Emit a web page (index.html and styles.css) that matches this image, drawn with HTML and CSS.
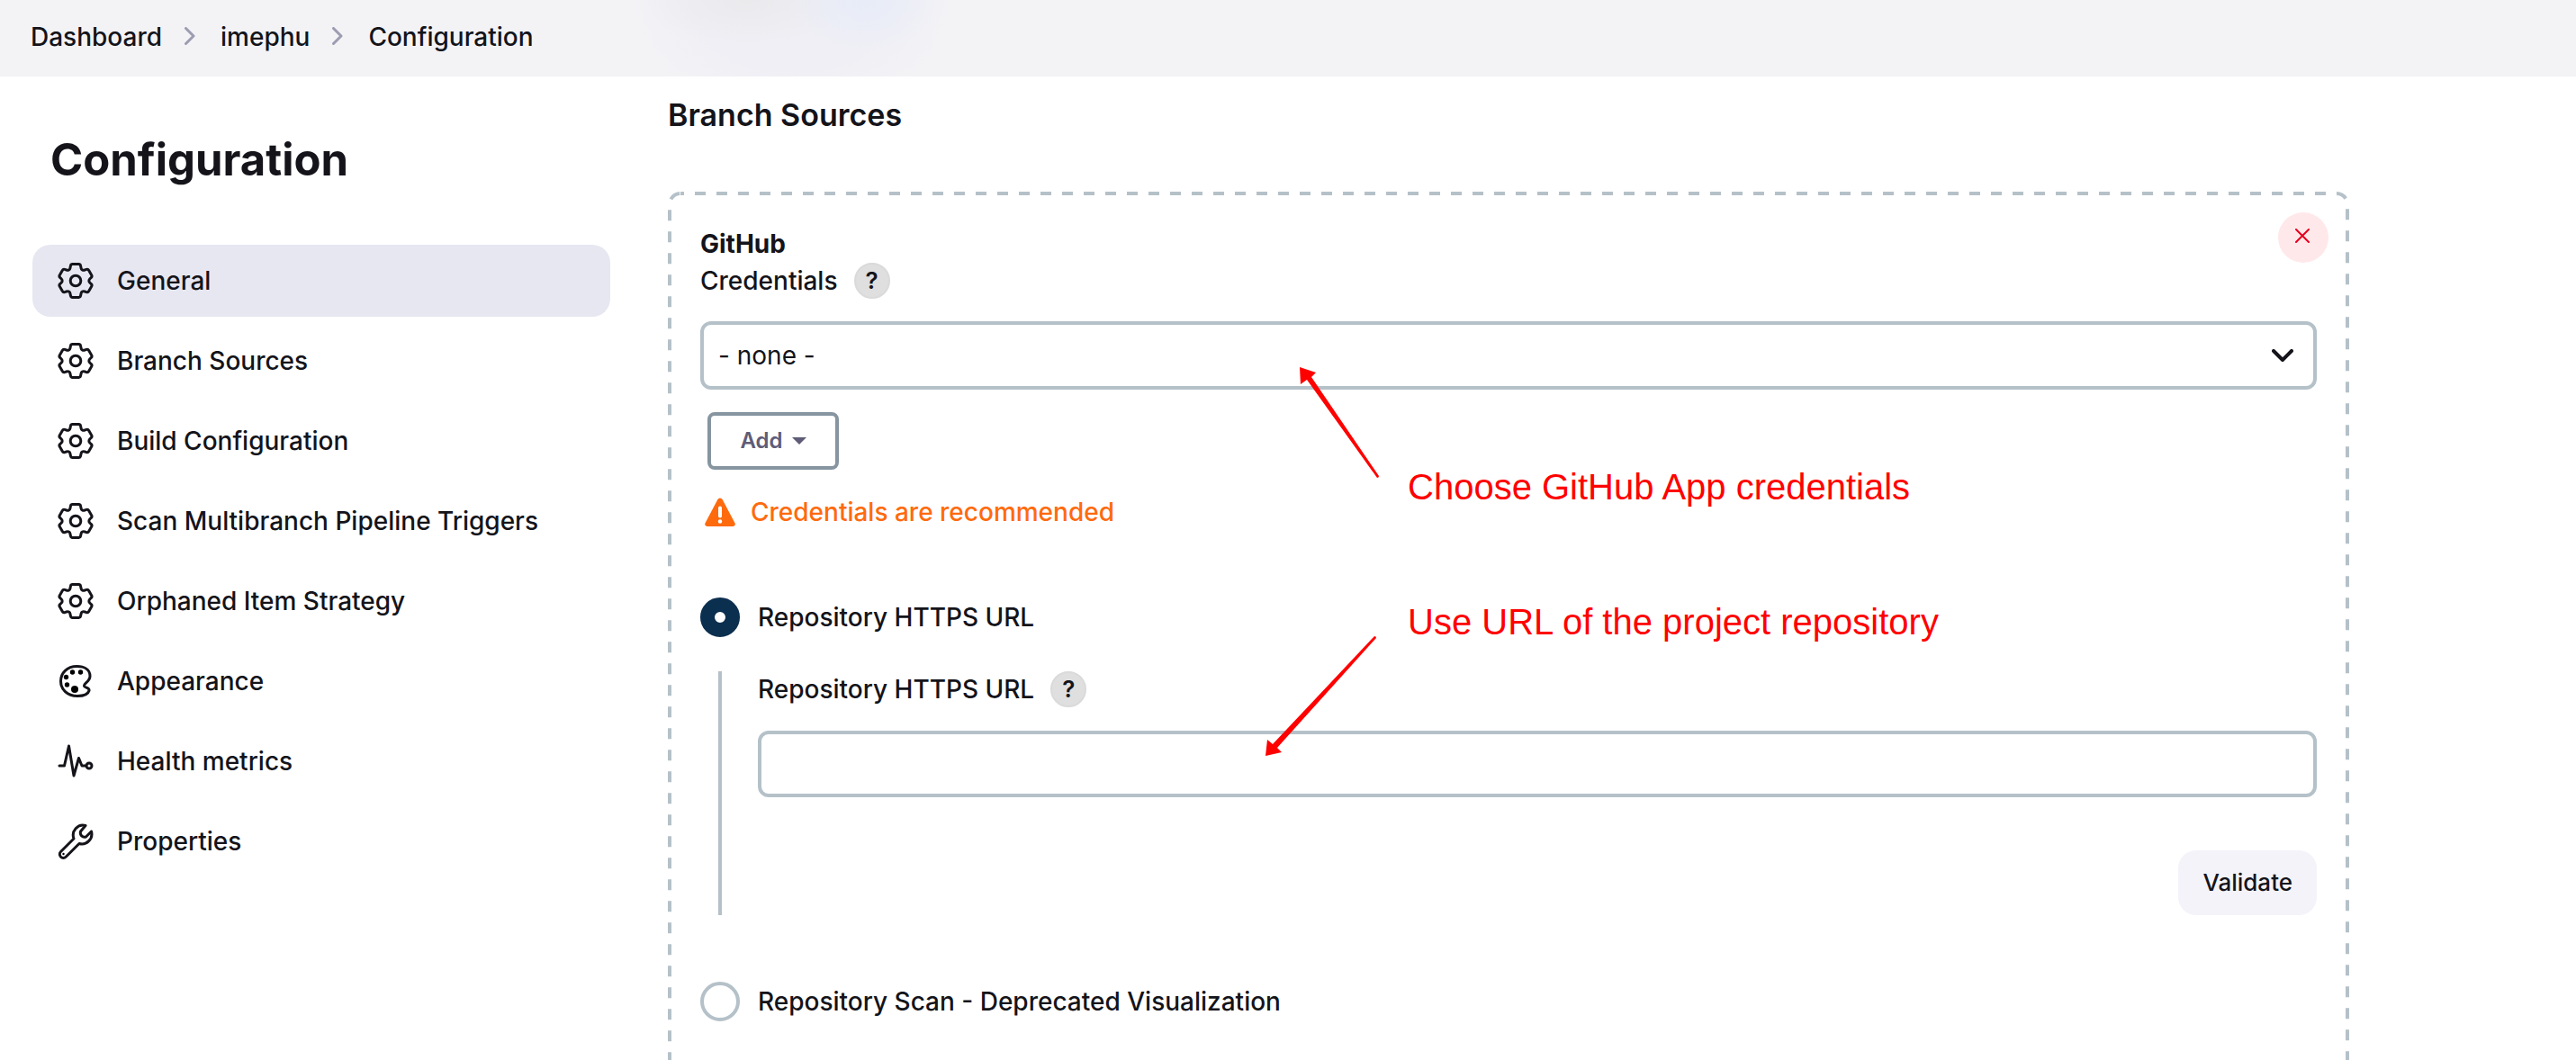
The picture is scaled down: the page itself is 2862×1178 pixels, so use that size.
FILE: index.html
```html
<!DOCTYPE html>
<html lang="en">
<head>
<meta charset="utf-8">
<title>Configuration - imephu</title>
<link rel="stylesheet" href="styles.css">
</head>
<body>
<svg class="sprite" aria-hidden="true">
  <symbol id="gear" viewBox="0 0 40 40">
    <path d="M16.500 1.600H23.500A2 2 0 0 1 25.500 3.200L26.200 6.400A2.500 2.500 0 0 0 29.500 8.200L32.100 7.400A2.200 2.200 0 0 1 34.700 8.400L37.700 13.700A2.200 2.200 0 0 1 37.200 16.500L35.700 18A2.800 2.800 0 0 0 35.700 22L37.200 23.500A2.200 2.200 0 0 1 37.700 26.300L34.700 31.600A2.200 2.200 0 0 1 32.100 32.600L29.500 31.800A2.500 2.500 0 0 0 26.200 33.600L25.500 36.800A2 2 0 0 1 23.500 38.400H16.500A2 2 0 0 1 14.500 36.800L13.800 33.600A2.500 2.500 0 0 0 10.500 31.800L7.900 32.600A2.200 2.200 0 0 1 5.300 31.600L2.300 26.300A2.200 2.200 0 0 1 2.800 23.500L4.300 22A2.800 2.800 0 0 0 4.300 18L2.800 16.500A2.200 2.200 0 0 1 2.300 13.700L5.300 8.400A2.200 2.200 0 0 1 7.900 7.400L10.500 8.200A2.500 2.500 0 0 0 13.800 6.400L14.500 3.200A2 2 0 0 1 16.500 1.600z" fill="none" stroke="currentColor" stroke-width="3" stroke-linejoin="round"/>
    <circle cx="20" cy="20" r="5.800" fill="none" stroke="currentColor" stroke-width="3"/>
  </symbol>
  <symbol id="palette" viewBox="0 0 40 40">
    <path d="M29.500 25.500C28.500 22.500 36 20.500 36 14.500 36 7 29.500 3.500 21.500 3.500 10.500 3.500 3.500 11 3.500 20S10.500 36.500 22 36.500c7 0 12-2.500 13-6 .8-3.400-4.700-3-5.500-5z" fill="none" stroke="currentColor" stroke-width="3" stroke-linejoin="round"/>
    <circle cx="16.500" cy="10" r="2.700"/><circle cx="25.500" cy="10" r="2.700"/><circle cx="9.500" cy="15.500" r="2.700"/><circle cx="10.500" cy="24" r="2.700"/><circle cx="19" cy="29" r="4"/>
  </symbol>
  <symbol id="pulse" viewBox="0 0 40 40">
    <path d="M2 25h5.500L12.500 3l5.500 33 5.500-19.500L27 25h4.500" fill="none" stroke="currentColor" stroke-width="3" stroke-linejoin="round" stroke-linecap="round"/>
    <circle cx="35" cy="25" r="3" fill="none" stroke="currentColor" stroke-width="3"/>
  </symbol>
  <symbol id="wrench" viewBox="0 0 40 40">
    <path d="M31 2.500a11 11 0 0 0-13 14.500L3.500 31.500a4 4 0 0 0 5.700 5.700L24 22.500A11 11 0 0 0 37.500 9L31.500 15c-4 1-7-2-6-6z" fill="none" stroke="currentColor" stroke-width="3" stroke-linejoin="round"/>
    <circle cx="6.500" cy="34" r="1.200"/>
  </symbol>
</svg>

<header class="header">
  <nav aria-label="Breadcrumb">
    <ol class="crumbs">
      <li><a href="#">Dashboard</a></li>
      <li class="crumb-sep" aria-hidden="true"><svg viewBox="0 0 12 20"><path d="M1.500 1.500 10 10l-8.500 8.500"/></svg></li>
      <li><a href="#">imephu</a></li>
      <li class="crumb-sep" aria-hidden="true"><svg viewBox="0 0 12 20"><path d="M1.500 1.500 10 10l-8.500 8.500"/></svg></li>
      <li><a href="#">Configuration</a></li>
    </ol>
  </nav>
</header>

<div class="page">
  <aside class="side">
    <h1>Configuration</h1>
    <nav class="tasks" aria-label="Sections">
      <a class="task active" href="#"><svg><use href="#gear"/></svg>General</a>
      <a class="task" href="#"><svg><use href="#gear"/></svg>Branch Sources</a>
      <a class="task" href="#"><svg><use href="#gear"/></svg>Build Configuration</a>
      <a class="task" href="#"><svg><use href="#gear"/></svg>Scan Multibranch Pipeline Triggers</a>
      <a class="task" href="#"><svg><use href="#gear"/></svg>Orphaned Item Strategy</a>
      <a class="task" href="#"><svg><use href="#palette"/></svg>Appearance</a>
      <a class="task" href="#"><svg><use href="#pulse"/></svg>Health metrics</a>
      <a class="task" href="#"><svg><use href="#wrench"/></svg>Properties</a>
    </nav>
  </aside>

  <main class="main">
    <h2>Branch Sources</h2>
    <form class="source">
      <svg class="source-outline" aria-hidden="true"><rect x="2" y="2" rx="12"/></svg>
      <button class="remove" type="button" aria-label="Delete"><svg viewBox="0 0 16 16"><path d="M1 1l14 14M15 1L1 15"/></svg></button>

      <h3>GitHub</h3>
      <div class="label-row">
        <label for="cred">Credentials</label>
        <button class="help" type="button" aria-label="Help for Credentials">?</button>
      </div>
      <div class="select-wrap">
        <select class="field" id="cred"><option>- none -</option></select>
        <svg viewBox="0 0 24 14" aria-hidden="true"><path d="M2 2l10 10L22 2"/></svg>
      </div>
      <button class="add" type="button">Add <span class="caret"></span></button>
      <p class="warning">
        <svg viewBox="0 0 36 34" aria-hidden="true"><path d="M18 1.500a3 3 0 0 1 2.600 1.500l14 26.500a2.500 2.500 0 0 1-2.200 3.500H3.600a2.500 2.500 0 0 1-2.200-3.500L15.400 3A3 3 0 0 1 18 1.500z" fill="currentColor"/><path d="M18 12.500v9" stroke="#fff" stroke-width="4" stroke-linecap="round"/><circle cx="18" cy="27.500" r="2.200" fill="#fff"/></svg>
        Credentials are recommended
      </p>

      <div class="radio-row">
        <input type="radio" name="mode" id="mode-url" checked>
        <label for="mode-url">Repository HTTPS URL</label>
      </div>
      <div class="nested">
        <div class="label-row">
          <label for="url">Repository HTTPS URL</label>
          <button class="help" type="button" aria-label="Help for Repository HTTPS URL">?</button>
        </div>
        <input class="field" type="text" id="url">
        <button class="validate" type="button">Validate</button>
      </div>
      <div class="radio-row">
        <input type="radio" name="mode" id="mode-scan">
        <label for="mode-scan">Repository Scan - Deprecated Visualization</label>
      </div>

      <div class="note note-cred">
        <svg viewBox="0 0 90 124" aria-hidden="true"><path d="M0 0l18 6-5 5 75 110q0 2-2 2L8 14l-7 5z"/></svg>
        <span>Choose GitHub App credentials</span>
      </div>
      <div class="note note-url">
        <svg viewBox="0 0 124 134" aria-hidden="true"><path d="M0 134l2-18 6 5L121 1q2 0 2 2L13 125l5 5z"/></svg>
        <span>Use URL of the project repository</span>
      </div>
    </form>
  </main>
</div>
</body>
</html>
```
FILE: styles.css
```css
:root {
  --text: #14141a;
  --field-border: #b5c1c8;
}
* { box-sizing: border-box; }
body {
  margin: 0;
  height: 100vh;
  display: flex;
  flex-direction: column;
  overflow: hidden;
  background: #fff;
  color: var(--text);
  font: 500 28px/42px Inter, "Liberation Sans", sans-serif;
}
h1, h2, h3, p { margin: 0; }
a { color: inherit; text-decoration: none; }
button, input, select { font: inherit; color: inherit; margin: 0; }
.sprite { display: none; }

.header {
  flex: none;
  height: 85px;
  padding: 20px 34px;
  background:
    radial-gradient(ellipse 90px 60px at 960px 0, #e7ecf8, rgba(231, 236, 248, 0)),
    radial-gradient(ellipse 120px 50px at 830px 0, #eae9ec, rgba(234, 233, 236, 0)),
    radial-gradient(ellipse 180px 130px at 880px 0, #f0eff5 60%, rgba(240, 239, 245, 0)),
    #f3f3f6;
}
.crumbs {
  display: flex;
  align-items: center;
  margin: 0;
  padding: 0;
  list-style: none;
}
.crumb-sep { display: flex; padding: 0 28px 2px 25px; }
.crumb-sep svg { width: 12px; height: 20px; }
.crumb-sep path { fill: none; stroke: #9c9cb2; stroke-width: 3; stroke-linecap: round; stroke-linejoin: round; }

.page { flex: 1; display: flex; min-height: 0; }
.side { flex: none; width: 742px; padding: 61px 64px 0 36px; }
h1 { padding-left: 20px; font-size: 49px; font-weight: 700; line-height: 64px; }
.tasks { display: flex; flex-direction: column; gap: 9px; margin-top: 62px; }
.task {
  display: flex;
  align-items: center;
  gap: 26px;
  height: 80px;
  padding: 0 28px;
  border-radius: 20px;
}
.task svg { width: 40px; height: 40px; }
.task.active { background: #e7e7f2; }

.main { flex: 1; display: flex; flex-direction: column; min-width: 0; padding: 21px 252px 0 0; }
h2 { font-size: 34px; font-weight: 600; line-height: 44px; }
.source {
  position: relative;
  flex: 1;
  display: flex;
  flex-direction: column;
  margin-top: 63px;
  padding: 37px 36px 0;
  font-weight: 450;
}
.source-outline { position: absolute; inset: 0; width: 100%; height: 100%; }
.source-outline rect {
  width: calc(100% - 4px);
  height: calc(100% + 40px);
  fill: none;
  stroke: var(--field-border);
  stroke-width: 4;
  stroke-dasharray: 12 12;
  stroke-dashoffset: 8;
}
.remove {
  position: absolute;
  top: 23px;
  right: 23px;
  display: grid;
  place-items: center;
  width: 56px;
  height: 56px;
  padding: 0 2px 4px 0;
  border: 0;
  border-radius: 50%;
  background: #ffe8ea;
}
.remove svg { width: 16px; height: 16px; }
.remove path { stroke: #e6001f; stroke-width: 2; stroke-linecap: round; }

h3 { font-size: 28px; font-weight: 700; line-height: 42px; }
.label-row { display: flex; align-items: center; gap: 18px; height: 40px; }
.help {
  width: 40px;
  height: 40px;
  padding: 0;
  border: 2px solid #dadada;
  border-radius: 50%;
  background: #dfdfdf;
  font-size: 26px;
  font-weight: 600;
  line-height: 36px;
}
.field {
  appearance: none;
  width: 100%;
  border: 4px solid var(--field-border);
  border-radius: 12px;
  background: #fff;
  padding: 0 16px;
}
.select-wrap { position: relative; margin-top: 25px; display: flex; }
.select-wrap .field { height: 76px; font-weight: 400; }
.select-wrap svg { position: absolute; right: 26px; top: 31px; width: 24px; height: 14px; pointer-events: none; }
.select-wrap path { fill: none; stroke: var(--text); stroke-width: 4; stroke-linecap: round; stroke-linejoin: round; }
.add {
  display: flex;
  align-items: center;
  justify-content: center;
  gap: 10px;
  align-self: flex-start;
  width: 146px;
  height: 64px;
  margin: 25px 0 0 8px;
  border: 4px solid #8695a0;
  border-radius: 8px;
  background: #fff;
  color: #5f5c78;
  font-size: 24px;
  font-weight: 600;
}
.caret { border: 8px solid transparent; border-top-color: currentColor; border-bottom: 0; }
.warning {
  display: flex;
  align-items: center;
  gap: 16px;
  margin-top: 26px;
  padding-left: 4px;
  color: #ff6a0d;
}
.warning svg { width: 36px; height: 34px; }

.radio-row { display: flex; align-items: center; gap: 20px; height: 44px; margin-top: 74px; }
.radio-row input {
  appearance: none;
  width: 44px;
  height: 44px;
  border: 4px solid var(--field-border);
  border-radius: 50%;
  background: #fff;
}
.radio-row input:checked { border: 16px solid #0b2f4f; }
.nested {
  display: flex;
  flex-direction: column;
  margin: 38px 0 0 20px;
  padding-left: 40px;
  border-left: 4px solid var(--field-border);
}
.nested .field { height: 74px; margin-top: 26px; }
.validate {
  align-self: flex-end;
  height: 72px;
  margin-top: 59px;
  padding: 0 27px;
  border: 0;
  border-radius: 20px;
  background: #f4f3f9;
  font-size: 26px;
  font-weight: 500;
}

/* Annotations drawn over the form */
.note { position: absolute; color: #f00; font: 400 40px/46px "Liberation Sans", Arial, sans-serif; }
.note svg { position: absolute; fill: currentColor; }
.note span { white-space: nowrap; }
.note-cred { left: 822px; top: 305px; }
.note-cred svg { left: -120px; top: -110px; width: 90px; height: 124px; }
.note-url { left: 822px; top: 455px; }
.note-url svg { left: -158px; top: 38px; width: 124px; height: 134px; }
```
